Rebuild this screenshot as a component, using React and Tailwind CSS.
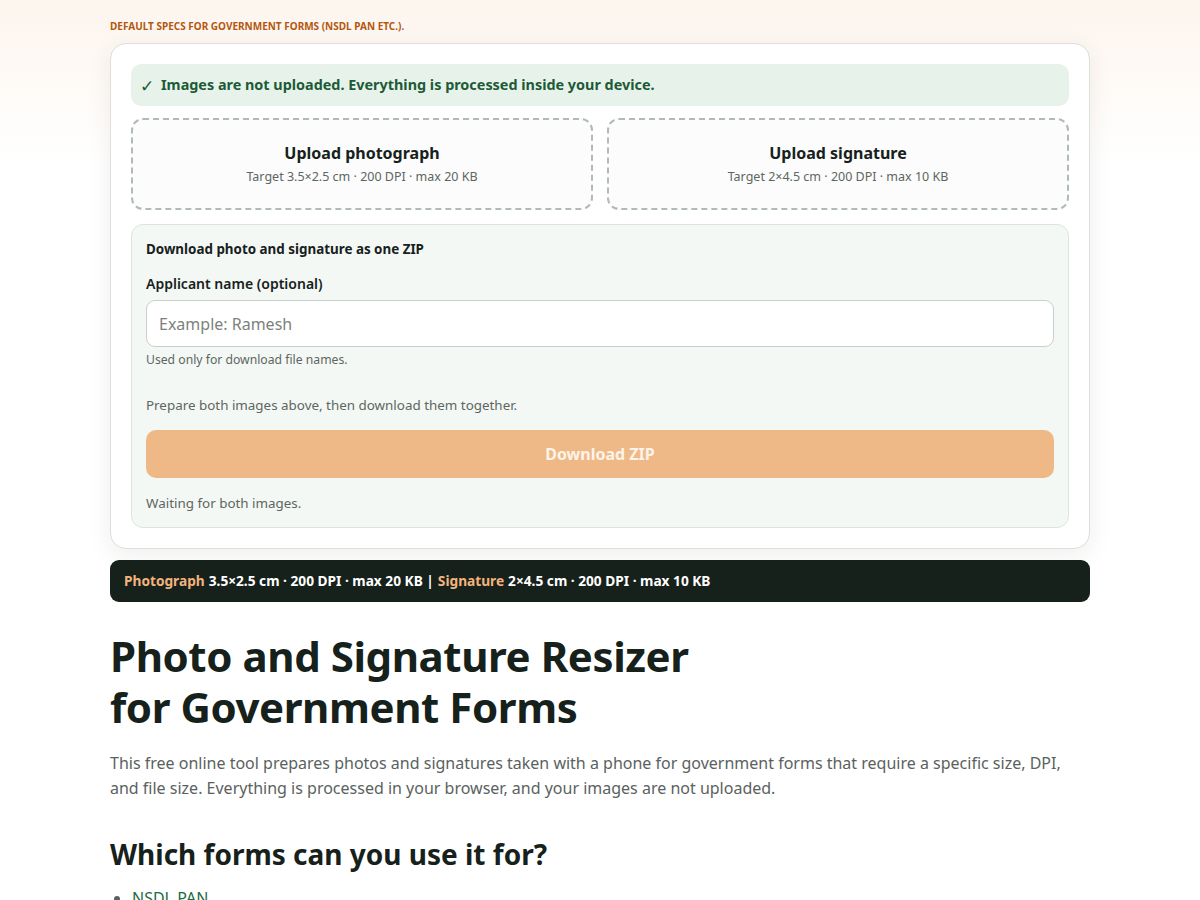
import { useState } from "react";

const font = { fontFamily: '"Noto Sans", "Open Sans", sans-serif' };

function UploadBox({ title, spec }) {
  return (
    <button
      type="button"
      className="flex h-[92px] flex-col items-center justify-center rounded-[12px] border-2 border-dashed border-[#afbbb3] bg-[#fbfcfb] pb-[2px]"
    >
      <span className="text-[16px] font-bold leading-[22px] text-[#17211c]">{title}</span>
      <span className="mt-[5px] text-[12.5px] leading-4 text-[#5d6661]">{spec}</span>
    </button>
  );
}

export default function App() {
  const [name, setName] = useState("");

  return (
    <div
      className="min-h-screen bg-[linear-gradient(180deg,#fdf5ee_0px,#fefaf6_80px,#ffffff_160px)] text-[#17211c]"
      style={font}
    >
      <div className="mx-auto w-[980px] pt-[18px] pb-10">
        <p className="text-[10px] font-bold uppercase leading-4 text-[#b5560f]">
          Default specs for government forms (NSDL PAN etc.).
        </p>

        {/* tool card */}
        <div className="mt-[9px] rounded-[16px] border border-[#dcdfdc] bg-white p-5 shadow-[0_6px_24px_rgba(60,40,20,0.08)]">
          <div className="flex h-[42px] items-center gap-[7px] rounded-[10px] bg-[#e7f3ea] px-[9px] text-[14.4px] font-bold text-[#1d5a37]">
            <span className="text-[17px] font-normal leading-none">✓</span>
            <span>Images are not uploaded. Everything is processed inside your device.</span>
          </div>

          <div className="mt-[12px] grid grid-cols-2 gap-[14px]">
            <UploadBox title="Upload photograph" spec="Target 3.5×2.5 cm · 200 DPI · max 20 KB" />
            <UploadBox title="Upload signature" spec="Target 2×4.5 cm · 200 DPI · max 10 KB" />
          </div>

          <div className="mt-[14px] rounded-[12px] border border-[#dde4df] bg-[#f4f8f5] px-[14px] pt-[14px] pb-[14px]">
            <h3 className="text-[13.4px] font-bold leading-5">Download photo and signature as one ZIP</h3>
            <label className="mt-[15px] block text-[14px] font-semibold leading-5" htmlFor="applicant">
              Applicant name (optional)
            </label>
            <input
              id="applicant"
              value={name}
              onChange={(e) => setName(e.target.value)}
              placeholder="Example: Ramesh"
              className="mt-[6px] h-[47px] w-full rounded-[9px] border border-[#c9cfcb] bg-white px-3 text-[16px] text-[#17211c] outline-none placeholder:text-[#7b827e]"
            />
            <p className="mt-[5px] text-[12.2px] leading-4 text-[#5d6661]">Used only for download file names.</p>

            <p className="mt-[27px] text-[13.4px] leading-5 text-[#5d6661]">
              Prepare both images above, then download them together.
            </p>
            <button
              type="button"
              disabled
              className="mt-[15px] h-[48px] w-full rounded-[10px] bg-[#efb987] text-[16px] font-bold text-[#fdf3e9]"
            >
              Download ZIP
            </button>
            <p className="mt-[15px] text-[13.4px] leading-5 text-[#5d6661]">Waiting for both images.</p>
          </div>
        </div>

        {/* spec strip */}
        <div className="mt-[11px] flex h-[42px] items-center rounded-[9px] bg-[#17211c] px-[14px] text-[13.7px] font-bold text-white">
          <span className="text-[#f2b47c]">Photograph</span>
          <span className="ml-1">3.5×2.5 cm · 200 DPI · max 20 KB |</span>
          <span className="ml-1 text-[#f2b47c]">Signature</span>
          <span className="ml-1">2×4.5 cm · 200 DPI · max 10 KB</span>
        </div>

        <h1 className="mt-[28px] text-[42px] font-bold leading-[51px] tracking-[-0.01em]">
          Photo and Signature Resizer
          <br />
          for Government Forms
        </h1>
        <p className="mt-[19px] text-[16px] leading-[25px] text-[#5a625e]">
          This free online tool prepares photos and signatures taken with a phone for government forms that require a
          specific size, DPI, and file size. Everything is processed in your browser, and your images are not uploaded.
        </p>

        <h2 className="mt-[35px] text-[28px] font-bold leading-[36px]">Which forms can you use it for?</h2>
        <ul className="mt-[14px] list-disc pl-[22px] text-[16px] leading-6">
          <li className="text-[#5a625e]">
            <a href="#nsdl-pan" className="text-[#1d6b3e]">NSDL PAN</a>
          </li>
          <li className="text-[#5a625e]">
            <a href="#uti-pan" className="text-[#1d6b3e]">UTI PAN</a>
          </li>
        </ul>
      </div>
    </div>
  );
}
